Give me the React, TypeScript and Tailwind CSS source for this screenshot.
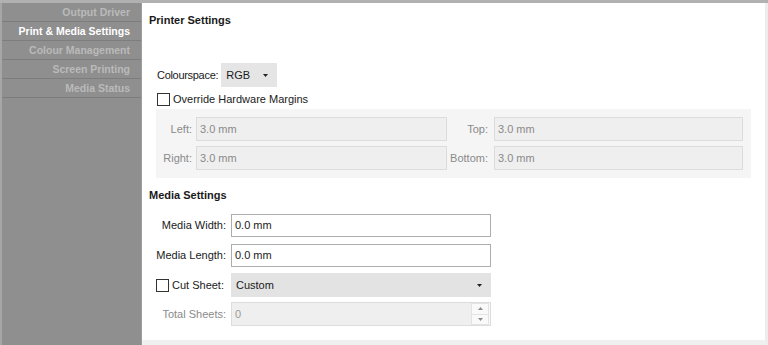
import React from 'react'

const navItems = [
  { label: 'Output Driver', active: false },
  { label: 'Print & Media Settings', active: true },
  { label: 'Colour Management', active: false },
  { label: 'Screen Printing', active: false },
  { label: 'Media Status', active: false },
]

function Checkbox() {
  return <div className="w-[13px] h-[13px] border border-[#333333] bg-white shrink-0" />
}

function Caret() {
  return (
    <svg width="5" height="3" viewBox="0 0 5 3">
      <path d="M0 0 L5 0 L2.5 3 Z" fill="#222222" />
    </svg>
  )
}

function DisabledInput({ value, className }: { value: string; className: string }) {
  return (
    <div className={`h-[24px] border border-[#dcdcdc] bg-[#efefef] flex items-center px-[3px] text-[#8a8a8a] ${className}`}>
      {value}
    </div>
  )
}

export default function App() {
  return (
    <div
      className="w-[768px] h-[345px] bg-white flex flex-col overflow-hidden text-[11px] text-[#1a1a1a]"
      style={{ fontFamily: '"Liberation Sans", Arial, sans-serif' }}
    >
      {/* top rule */}
      <div className="h-[3px] bg-[#b1b1b1] shrink-0" />

      <div className="flex flex-1 min-h-0">
        {/* Sidebar */}
        <div className="w-[142px] shrink-0 bg-[#8f8f8f] border-l-2 border-[#a6a6a6] border-r border-r-[#9d9d9d] flex flex-col">
          {navItems.map((item) => (
            <div
              key={item.label}
              className={`h-[19px] flex items-center justify-end pr-[11px] pt-[1px] border-b border-[#7d7d7d] font-bold text-[10.5px] ${
                item.active ? 'text-white' : 'text-[#bababa]'
              }`}
            >
              {item.label}
            </div>
          ))}
        </div>

        {/* Main */}
        <div className="flex-1 flex flex-col min-w-0">
          <div className="flex-1 flex flex-col pl-[7px] pt-[10px]">
            <div className="font-bold h-[14px] leading-[14px]">Printer Settings</div>

            <div className="ml-[8px] mt-[36px] flex items-center h-[24px] gap-[3px]">
              <span className="whitespace-nowrap tracking-[-0.3px]">Colourspace:</span>
              <div className="w-[56px] h-[24px] bg-[#e5e5e5] flex items-center justify-between pl-[5px] pr-[9px]">
                <span>RGB</span>
                <Caret />
              </div>
            </div>

            <div className="ml-[8px] mt-[6px] flex items-center gap-[3px] h-[13px]">
              <Checkbox />
              <span>Override Hardware Margins</span>
            </div>

            {/* Margins panel */}
            <div className="ml-[7px] mt-[3px] w-[595px] bg-[#f5f5f5] pt-[8px] pb-[8px] pr-[8px] flex flex-col gap-[5px] text-[#8a8a8a]">
              <div className="flex items-center">
                <span className="w-[36px] text-right">Left:</span>
                <DisabledInput value="3.0 mm" className="ml-[4px] w-[251px]" />
                <span className="w-[41px] text-right">Top:</span>
                <DisabledInput value="3.0 mm" className="ml-[6px] w-[249px]" />
              </div>
              <div className="flex items-center">
                <span className="w-[36px] text-right">Right:</span>
                <DisabledInput value="3.0 mm" className="ml-[4px] w-[251px]" />
                <span className="w-[41px] text-right">Bottom:</span>
                <DisabledInput value="3.0 mm" className="ml-[6px] w-[249px]" />
              </div>
            </div>

            <div className="font-bold h-[14px] leading-[14px] mt-[10px]">Media Settings</div>

            {/* Media fields */}
            <div className="mt-[12px] flex flex-col">
              <div className="flex items-center">
                <span className="w-[77px] text-right">Media Width:</span>
                <div className="ml-[5px] w-[260px] h-[23px] border border-[#adadad] bg-white flex items-center px-[3px]">
                  0.0 mm
                </div>
              </div>
              <div className="flex items-center mt-[7px]">
                <span className="w-[77px] text-right">Media Length:</span>
                <div className="ml-[5px] w-[260px] h-[23px] border border-[#adadad] bg-white flex items-center px-[3px]">
                  0.0 mm
                </div>
              </div>
              <div className="flex items-center mt-[6px]">
                <div className="w-[77px] flex items-center gap-[3px] pl-[7px]">
                  <Checkbox />
                  <span>Cut Sheet:</span>
                </div>
                <div className="ml-[5px] w-[260px] h-[24px] bg-[#e3e3e3] flex items-center justify-between pl-[5px] pr-[9px]">
                  <span>Custom</span>
                  <Caret />
                </div>
              </div>
              <div className="flex items-center mt-[5px]">
                <span className="w-[77px] text-right text-[#8a8a8a]">Total Sheets:</span>
                <div className="ml-[5px] w-[260px] h-[24px] border border-[#dcdcdc] bg-[#f9f9f9] flex">
                  <div className="flex-1 bg-[#efefef] flex items-center px-[3px] text-[#9a9a9a]">0</div>
                  <div className="w-[18px] mr-[1px] flex flex-col">
                    <div className="flex-1 flex items-center justify-center border border-[#e3e3e3]">
                      <svg width="5" height="3" viewBox="0 0 5 3">
                        <path d="M0 3 L5 3 L2.5 0 Z" fill="#8a8a8a" />
                      </svg>
                    </div>
                    <div className="flex-1 flex items-center justify-center border border-t-0 border-[#e3e3e3]">
                      <svg width="5" height="3" viewBox="0 0 5 3">
                        <path d="M0 0 L5 0 L2.5 3 Z" fill="#8a8a8a" />
                      </svg>
                    </div>
                  </div>
                </div>
              </div>
            </div>
          </div>
          <div className="h-[5px] bg-[#f0f0f0] shrink-0" />
        </div>

        {/* Right strip */}
        <div className="w-[3px] bg-[#ededed] shrink-0" />
      </div>
    </div>
  )
}
